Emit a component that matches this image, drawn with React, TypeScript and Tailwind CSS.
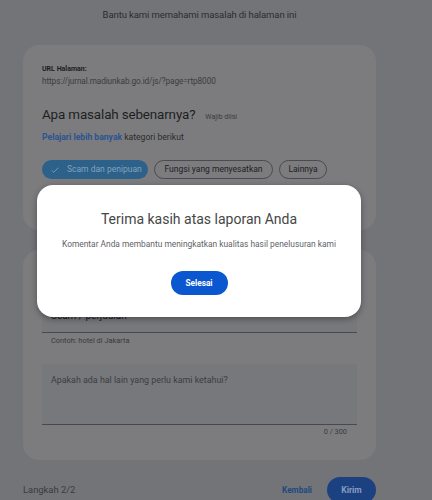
import React from "react";

export default function App() {
  return (
    <div
      className="relative w-[432px] h-[500px] overflow-hidden bg-[#737478]"
      style={{ fontFamily: "Roboto, 'Open Sans', Arial, sans-serif" }}
    >
      {/* Page content, shown dimmed behind the dialog */}
      <div className="w-[399px] flex flex-col">
        <div className="pt-[8px] text-center text-[9.5px] leading-[14px] tracking-[-0.01em] text-[#2b2c2f]">
          Bantu kami memahami masalah di halaman ini
        </div>

        {/* Card 1 */}
        <div className="mx-[23px] mt-[23px] rounded-[16px] bg-[#7c7c7f] px-[19px] pt-[19px] pb-[51px] flex flex-col">
          <div className="text-[7px] leading-[10px] font-bold text-[#1d1d20]">URL Halaman:</div>
          <div className="mt-[1px] text-[8.2px] leading-[12px] tracking-[-0.01em] text-[#3a3b3e]">
            https://jurnal.madiunkab.go.id/js/?page=rtp8000
          </div>
          <div className="mt-[18px] flex items-baseline gap-[10px]">
            <span className="text-[13.4px] leading-[20px] tracking-[-0.01em] text-[#1e1f21]">Apa masalah sebenarnya?</span>
            <span className="text-[7px] text-[#3a3b3e]">Wajib diisi</span>
          </div>
          <div className="mt-[6px] text-[8.6px] leading-[12px] text-[#2a2b2d]">
            <span className="font-bold text-[#2b5490]">Pelajari lebih banyak</span> kategori berikut
          </div>
          <div className="mt-[17px] flex gap-[6px]">
            <div className="h-[19px] w-[106px] rounded-full bg-[#2e6189] flex items-center pl-[8px] gap-[7px] text-[8.5px] text-[#7fa3be]">
              <svg width="10" height="10" viewBox="0 0 24 24" fill="none" stroke="#7fa3be" strokeWidth="2">
                <path d="M4 12.5l5 5L20 6.5" />
              </svg>
              <span>Scam dan penipuan</span>
            </div>
            <div className="h-[19px] w-[119px] rounded-full border border-[#4a4b4e] flex items-center justify-center text-[8.5px] text-[#1f2022]">
              Fungsi yang menyesatkan
            </div>
            <div className="h-[19px] w-[48px] rounded-full border border-[#4a4b4e] flex items-center justify-center text-[8.5px] text-[#1f2022]">
              Lainnya
            </div>
          </div>
        </div>

        {/* Card 2 */}
        <div className="mx-[23px] mt-[20px] h-[210px] rounded-[16px] bg-[#7c7c7f] px-[19px] pt-[43px] flex flex-col">
          <div className="h-[40px] bg-[#77787b] border-b border-[#48494c] flex items-end pl-[9px] pb-[9px] text-[10px] text-[#1f2022]">
            Scam / perjudian
          </div>
          <div className="pl-[9px] mt-[3px] text-[7.4px] leading-[10px] text-[#38393b]">Contoh: hotel di Jakarta</div>
          <div className="mt-[18px] h-[61px] bg-[#77787b] border-b border-[#48494c] pl-[9px] pt-[10px] text-[8.9px] leading-[13px] text-[#3c3d40]">
            Apakah ada hal lain yang perlu kami ketahui?
          </div>
          <div className="mt-[2px] pr-[10px] text-right text-[7.4px] leading-[10px] text-[#3a3b3d]">0 / 300</div>
        </div>

        {/* Footer */}
        <div className="mx-[23px] mt-[17px] flex items-center">
          <span className="text-[9.4px] text-[#3a3b3e]">Langkah 2/2</span>
          <span className="ml-auto text-[8.2px] font-bold text-[#22497f]">Kembali</span>
          <div className="ml-[15px] h-[26px] w-[49px] rounded-full bg-[#1c4180] flex items-center justify-center text-[8.5px] font-bold text-[#8a9cc0]">
            Kirim
          </div>
        </div>
      </div>

      {/* Dialog */}
      <div className="absolute left-[37px] top-[185px] w-[324px] h-[132px] rounded-[16px] bg-white shadow-[0_2px_6px_rgba(0,0,0,0.35)] flex flex-col items-center">
        <div className="mt-[24px] text-[14px] leading-[20px] text-[#444746]">Terima kasih atas laporan Anda</div>
        <div className="mt-[9px] text-[8.4px] leading-[12px] text-[#5f6368]">
          Komentar Anda membantu meningkatkan kualitas hasil penelusuran kami
        </div>
        <div className="mt-[21px] h-[24px] w-[57px] rounded-full bg-[#0b57d0] flex items-center justify-center text-[8.3px] font-bold text-white">
          Selesai
        </div>
      </div>
    </div>
  );
}
